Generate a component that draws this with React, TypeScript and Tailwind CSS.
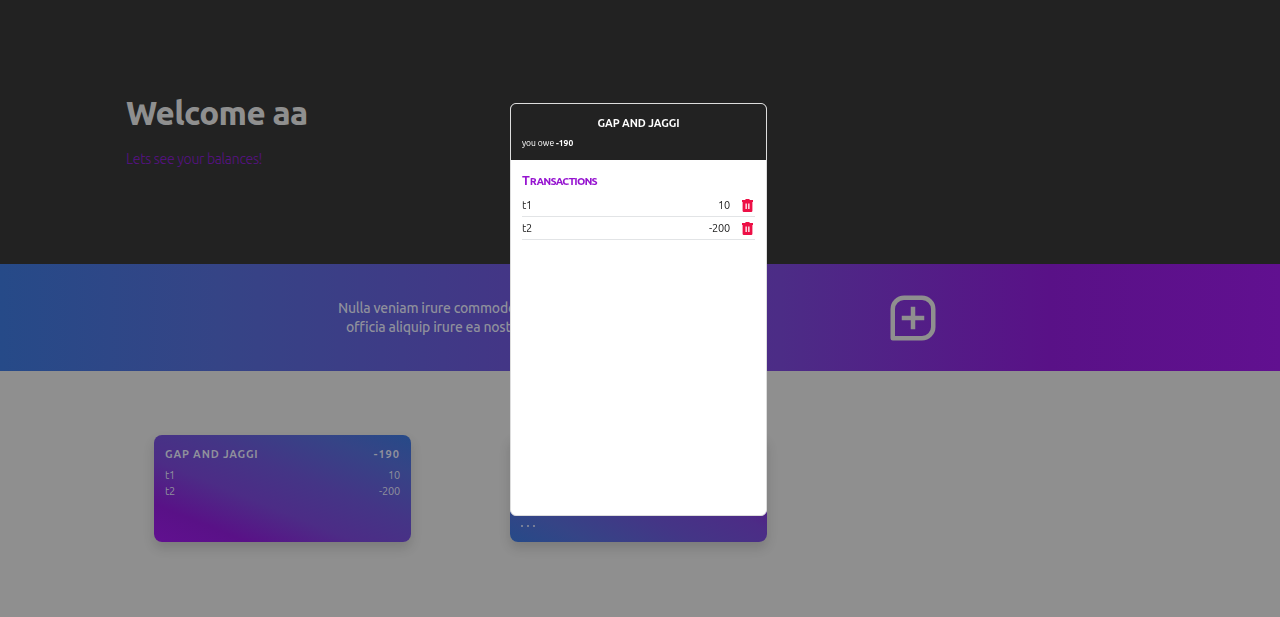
type Transaction = { name: string; amount: number };

const transactions: Transaction[] = [
  { name: 't1', amount: 10 },
  { name: 't2', amount: -200 },
];

function AddIcon() {
  return (
    <svg viewBox="0 0 24 24" className="size-[54px] text-[#8f8f8f]" fill="none" stroke="currentColor" strokeWidth="2">
      <path strokeLinejoin="round" d="M3 21V8a5 5 0 0 1 5-5h8a5 5 0 0 1 5 5v8a5 5 0 0 1-5 5z" />
      <path d="M12 7v10M7 12h10" />
    </svg>
  );
}

function TrashIcon() {
  return (
    <svg viewBox="0 0 11 13" className="mb-px h-[13px] w-[11px] text-[#ed1046]" fill="currentColor">
      <path
        fillRule="evenodd"
        d="M3.700 0h3.600l.5 1H11v2h-.6v8.800A1.200 1.200 0 0 1 9.200 13H1.800A1.200 1.200 0 0 1 .6 11.800V3H0V1h3.200zM3.500 4.500v5.500h1.300v-5.500zM6.200 4.500v5.500h1.300v-5.500z"
      />
    </svg>
  );
}

function Header() {
  return (
    <header className="h-[264px] bg-[#222] pl-[126px] pt-[88px]">
      <h1 className="text-[33px] font-extrabold leading-[50px] tracking-[-0.6px] text-[#8f8f8f]">Welcome aa</h1>
      <p className="mt-[10px] text-[14px] font-light leading-[22px] tracking-[-0.27px] text-[#591187]">Lets see your balances!</p>
    </header>
  );
}

function Banner() {
  return (
    <section className="flex h-[107px] items-center bg-[linear-gradient(90deg,#264a88_0%,#354486_17%,#443586_41%,#4c2c86_61%,#591187_82%,#611090_100%)]">
      <p className="ml-[338px] w-[400px] whitespace-nowrap text-[14px] font-medium leading-[19px] tracking-[-0.22px] text-[#8f909c]">
        Nulla veniam irure commodo
        <br />
        <span className="pl-2">officia aliquip irure ea nostrud</span>
      </p>
      <div className="ml-[147.500px]">
        <AddIcon />
      </div>
    </section>
  );
}

function Cards() {
  return (
    <main className="flex h-[246px] gap-[99px] bg-[#8f8f8f] pl-[154px] pt-16">
      <article className="h-[107px] w-[257px] rounded-lg bg-[linear-gradient(202deg,#264a88_0%,#354486_17%,#443586_41%,#4c2c86_61%,#591187_82%,#611090_100%)] px-[11px] pt-[11px] text-[#8f909c] shadow-[0_6px_12px_rgba(0,0,0,0.14)]">
        <div className="flex justify-between text-[11px] font-semibold leading-4 tracking-[0.8px]">
          <h2>GAP AND JAGGI</h2>
          <span className="font-bold tracking-[1px]">-190</span>
        </div>
        <ul className="mt-[5px] text-[11px] leading-4 tracking-[-0.2px]">
          {transactions.map((t) => (
            <li key={t.name} className="flex justify-between">
              <span>{t.name}</span>
              <span>{t.amount}</span>
            </li>
          ))}
        </ul>
      </article>
      <article className="flex h-[107px] w-[257px] items-end rounded-lg bg-[linear-gradient(28deg,#264a88_0%,#354486_17%,#443586_41%,#4c2c86_61%,#591187_82%,#611090_100%)] px-[11px] pb-[15px] shadow-[0_6px_12px_rgba(0,0,0,0.14)]">
        <div className="flex gap-1 text-[#8f909c]">
          <i className="size-[2px] rounded-full bg-current" />
          <i className="size-[2px] rounded-full bg-current" />
          <i className="size-[2px] rounded-full bg-current" />
        </div>
      </article>
    </main>
  );
}

function TransactionsModal() {
  return (
    <div className="fixed inset-0 flex items-start justify-center pr-[3px] pt-[103px]">
      <div role="dialog" className="h-[413px] w-[257px] overflow-hidden rounded-md border border-[#ddd] bg-white">
        <div className="h-14 bg-[#222] px-[11px] pt-3 text-white">
          <h2 className="text-center text-[11px] font-semibold leading-[15px] tracking-[-0.1px]">GAP AND JAGGI</h2>
          <p className="mt-[5px] text-[8.5px] leading-[14px]">
            you owe <b>-190</b>
          </p>
        </div>
        <div className="px-[11px] pt-[11px]">
          <h3 className="text-[13px] font-semibold leading-[18px] text-[#9614d0]">
            <span>T</span>
            <span className="[font-variant-caps:all-small-caps] text-[12px] tracking-[-0.85px]">ransactions</span>
          </h3>
          <ul className="mt-1 text-[11px] tracking-[-0.2px] text-[#222]">
            {transactions.map((t) => (
              <li key={t.name} className="flex h-[23px] items-center border-b border-[#e2e4e6] pr-[2px] pt-px">
                <span>{t.name}</span>
                <span className="ml-auto mr-3">{t.amount}</span>
                <TrashIcon />
              </li>
            ))}
          </ul>
        </div>
      </div>
    </div>
  );
}

export default function App() {
  return (
    <div className="h-[617px] overflow-hidden font-['Ubuntu','Noto_Sans',sans-serif]">
      <Header />
      <Banner />
      <Cards />
      <TransactionsModal />
    </div>
  );
}
